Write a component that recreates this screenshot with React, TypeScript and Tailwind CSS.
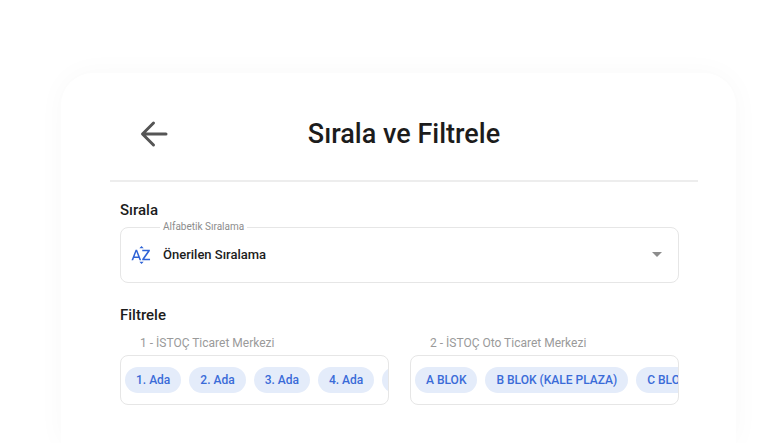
import { useState } from "react";
import { MdArrowDropDown, MdSortByAlpha } from "react-icons/md";

interface FilterGroupProps {
  title: string;
  options: string[];
}

const groups: FilterGroupProps[] = [
  {
    title: "1 - İSTOÇ Ticaret Merkezi",
    options: ["1. Ada", "2. Ada", "3. Ada", "4. Ada", "5. Ada"],
  },
  {
    title: "2 - İSTOÇ Oto Ticaret Merkezi",
    options: ["A BLOK", "B BLOK (KALE PLAZA)", "C BLOK"],
  },
];

function FilterGroup({ title, options }: FilterGroupProps) {
  return (
    <section className="min-w-0">
      <h3 className="pl-5 text-xs text-[#9a9a9a]">{title}</h3>
      <div className="mt-1 flex gap-2 overflow-hidden rounded-lg border border-[#e6e6e6] px-1 py-[11px]">
        {options.map((option) => (
          <button
            key={option}
            type="button"
            className="h-[26px] shrink-0 rounded-full bg-[#e4ecfa] px-[11px] text-xs font-medium text-[#3a6bd8]"
          >
            {option}
          </button>
        ))}
      </div>
    </section>
  );
}

export default function App() {
  const [sort, setSort] = useState("recommended");

  return (
    <div className="flex min-h-screen bg-white pt-[73px] pr-8 pl-[61px] font-['Roboto',sans-serif] text-[#1c1c1c]">
      <main className="min-w-0 flex-1 rounded-t-[32px] bg-white shadow-[0_0_28px_rgba(0,0,0,0.03)]">
        {/* Header */}
        <header className="mr-[38px] ml-[49px] grid h-[109px] grid-cols-[1fr_auto_1fr] items-center border-b-2 border-[#ededed] pt-[14px]">
          <button type="button" aria-label="Geri" className="ml-[30px] justify-self-start">
            <svg
              viewBox="0 0 28 28"
              className="h-7 w-7 fill-none stroke-[#555555] stroke-3"
              strokeLinecap="round"
              strokeLinejoin="round"
            >
              <path d="M26 14H3M13.5 3L2.500 14l11 11" />
            </svg>
          </button>
          <h1 className="text-[27px] leading-8 font-medium">Sırala ve Filtrele</h1>
        </header>

        <div className="mr-[57px] ml-[59px] pt-[18px]">
          {/* Sorting */}
          <h2 className="text-[15px] leading-5 font-medium">Sırala</h2>
          <div className="relative mt-[7px]">
            <label
              htmlFor="sort"
              className="absolute -top-2 left-10 bg-white px-[3px] text-[10px] leading-4 text-[#8c8c8c]"
            >
              Alfabetik Sıralama
            </label>
            <MdSortByAlpha className="pointer-events-none absolute top-[17px] left-[10px] size-[22px] text-[#2f63d6]" />
            <select
              id="sort"
              value={sort}
              onChange={(e) => setSort(e.target.value)}
              className="h-14 w-full appearance-none rounded-lg border border-[#e6e6e6] bg-transparent pr-10 pl-[42px] text-[13px] font-medium"
            >
              <option value="recommended">Önerilen Sıralama</option>
              <option value="asc">A - Z</option>
              <option value="desc">Z - A</option>
            </select>
            <MdArrowDropDown className="pointer-events-none absolute top-[15px] right-[10px] size-6 text-[#8c8c8c]" />
          </div>

          {/* Filters */}
          <h2 className="mt-[22px] text-[15px] leading-5 font-medium">Filtrele</h2>
          <div className="mt-[10px] grid grid-cols-2 gap-[21px]">
            {groups.map((group) => (
              <FilterGroup key={group.title} title={group.title} options={group.options} />
            ))}
          </div>
        </div>
      </main>
    </div>
  );
}
